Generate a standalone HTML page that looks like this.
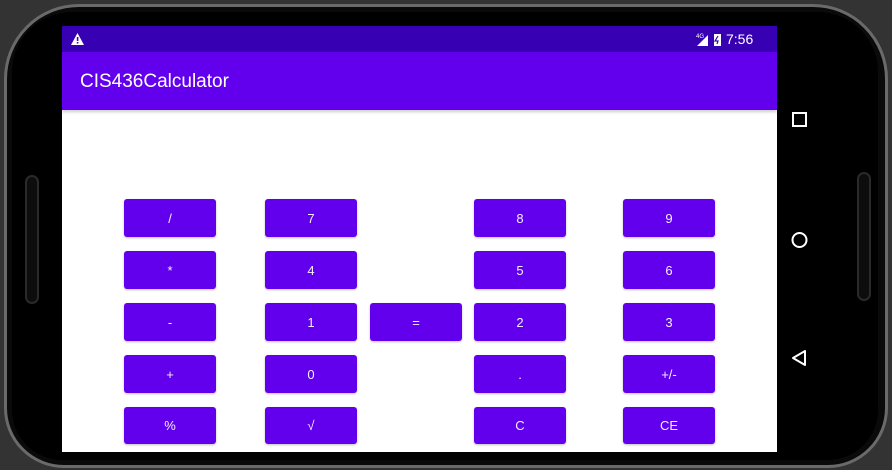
<!DOCTYPE html>
<html style="overflow:hidden;height:470px"><head><style>
body{margin:0;width:892px;height:470px;background:#333;overflow:hidden;position:relative;font-family:"Liberation Sans",sans-serif}
.phone{position:absolute;left:4px;top:4px;width:884px;height:464px;background:#0a0a0a;border-radius:75px 75px 60px 60px;border:3px solid #6a6a6a;box-sizing:border-box}
.inner{position:absolute;left:12px;top:12px;width:866px;height:448px;background:#000;border-radius:60px 60px 50px 50px}
.screen{position:absolute;left:62px;top:26px;width:715px;height:426px;background:#fff;overflow:hidden}
.status{position:absolute;left:0;top:0;width:715px;height:26px;background:#3700b3;color:#fff}
.bar{position:absolute;left:0;top:26px;width:715px;height:58px;background:#6200ee;box-shadow:0 2px 3px rgba(0,0,0,.2)}
.bar span{position:absolute;left:18px;top:19px;font-size:19px;color:#fff}
.b{position:absolute;width:92px;height:38px;background:#6200ee;border-radius:3px;color:#f4eeff;font-size:13px;display:flex;align-items:center;justify-content:center;box-shadow:0 1px 2px rgba(0,0,0,.25)}
.side{position:absolute;width:10px;height:125px;border:2px solid #2a2a2a;border-radius:8px;background:#0d0d0d}
</style></head><body>
<div class="phone"></div>
<div class="inner"></div>
<div class="side" style="left:25px;top:175px"></div>
<div class="side" style="left:857px;top:172px"></div>
<div class="screen">
 <div class="status">
  <svg style="position:absolute;left:9px;top:7px" width="13" height="12"><polygon points="6.5,0 13,12 0,12" fill="#fff"/><rect x="5.8" y="4" width="1.6" height="4" fill="#3700b3"/><rect x="5.8" y="9" width="1.6" height="1.5" fill="#3700b3"/></svg>
  <svg style="position:absolute;left:634px;top:6px" width="40" height="14"><text x="0" y="6" font-size="6" fill="#fff" font-family="Liberation Sans">4G</text><polygon points="12,14 12,3 1,14" fill="#fff"/><rect x="18" y="2" width="7" height="12" fill="#fff"/><path d="M22,4 L19,9 L22,9 L21,12" stroke="#3700b3" fill="none" stroke-width="1.2"/></svg>
  <span style="position:absolute;left:664px;top:5px;font-size:14px">7:56</span>
 </div>
 <div class="bar"><span>CIS436Calculator</span></div>
</div>
<div class="b" style="left:124px;top:199px">/</div>
<div class="b" style="left:265px;top:199px">7</div>
<div class="b" style="left:474px;top:199px">8</div>
<div class="b" style="left:623px;top:199px">9</div>
<div class="b" style="left:124px;top:251px">*</div>
<div class="b" style="left:265px;top:251px">4</div>
<div class="b" style="left:474px;top:251px">5</div>
<div class="b" style="left:623px;top:251px">6</div>
<div class="b" style="left:124px;top:303px">-</div>
<div class="b" style="left:265px;top:303px">1</div>
<div class="b" style="left:370px;top:303px">=</div>
<div class="b" style="left:474px;top:303px">2</div>
<div class="b" style="left:623px;top:303px">3</div>
<div class="b" style="left:124px;top:355px">+</div>
<div class="b" style="left:265px;top:355px">0</div>
<div class="b" style="left:474px;top:355px">.</div>
<div class="b" style="left:623px;top:355px">+/-</div>
<div class="b" style="left:124px;top:407px;height:37px">%</div>
<div class="b" style="left:265px;top:407px;height:37px">√</div>
<div class="b" style="left:474px;top:407px;height:37px">C</div>
<div class="b" style="left:623px;top:407px;height:37px">CE</div>
<svg style="position:absolute;left:788px;top:110px" width="24" height="270">
 <rect x="5" y="3" width="13" height="13" fill="none" stroke="#fff" stroke-width="2"/>
 <circle cx="11.5" cy="130" r="7" fill="none" stroke="#fff" stroke-width="2"/>
 <polygon points="17,241 17,255 5,248" fill="none" stroke="#fff" stroke-width="2" stroke-linejoin="round"/>
</svg>
</body></html>
